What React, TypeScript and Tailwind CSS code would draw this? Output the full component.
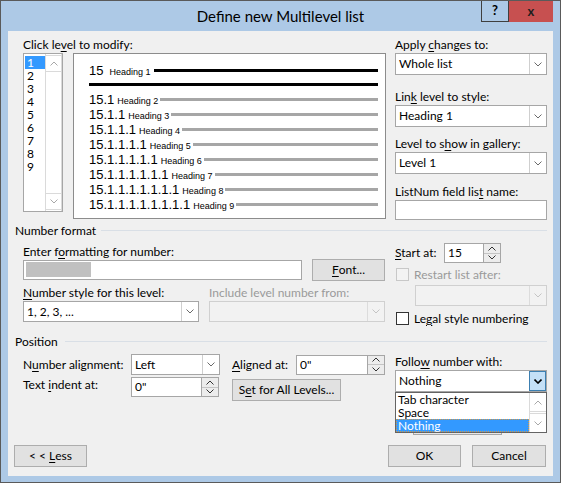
import React from "react";

const UI = "font-['Lato','Noto_Sans','Liberation_Sans',sans-serif]";
const ARIAL = "font-['Liberation_Sans',Arial,sans-serif]";

function U({ children }: { children: React.ReactNode }) {
  return <span className="underline decoration-1 underline-offset-2">{children}</span>;
}

function Down({ c = "#5f5f5f", w = 1 }: { c?: string; w?: number }) {
  return (
    <svg width="8" height="5" viewBox="0 0 8 5">
      <path d="M0.5 0.5 L4 4 L7.5 0.5" fill="none" stroke={c} strokeWidth={w} />
    </svg>
  );
}

function Up({ c = "#5f5f5f", w = 1 }: { c?: string; w?: number }) {
  return (
    <svg width="8" height="5" viewBox="0 0 8 5">
      <path d="M0.5 4.5 L4 1 L7.5 4.5" fill="none" stroke={c} strokeWidth={w} />
    </svg>
  );
}

function Lbl({ children, className = "" }: { children?: React.ReactNode; className?: string }) {
  return <div className={`h-[15px] whitespace-nowrap leading-[15px] ${className}`}>{children}</div>;
}

function Combo({
  value,
  className = "",
  disabled = false,
  active = false,
}: {
  value: string;
  className?: string;
  disabled?: boolean;
  active?: boolean;
}) {
  return (
    <div
      className={`flex border ${
        disabled ? "border-[#d0d0d0] bg-[#f2f2f2]" : "border-[#a6a6a6] bg-white"
      } ${className}`}
    >
      <div className="flex flex-1 items-center whitespace-nowrap pl-[3px] leading-none">{value}</div>
      {active ? (
        <div className="flex w-[17px] items-center justify-center border border-[#3c7fb1] bg-[#c4e0f7]">
          <Down c="#000" w={1.6} />
        </div>
      ) : (
        <div
          className={`flex w-[17px] items-center justify-center border-l ${
            disabled ? "border-[#dcdcdc]" : "border-[#cfcfcf]"
          }`}
        >
          <Down c={disabled ? "#c4c4c4" : "#6a6a6a"} />
        </div>
      )}
    </div>
  );
}

function Spin({ value, className = "" }: { value: string; className?: string }) {
  return (
    <div className={`flex ${className}`}>
      <div className="flex flex-1 items-center border border-[#a6a6a6] bg-white pl-[3px] leading-none">{value}</div>
      <div className="flex w-[17px] flex-col border border-l-0 border-[#a6a6a6] bg-[#ececec]">
        <div className="flex flex-1 items-center justify-center border-b border-[#c4c4c4]">
          <Up c="#333" />
        </div>
        <div className="flex flex-1 items-center justify-center">
          <Down c="#333" />
        </div>
      </div>
    </div>
  );
}

function Btn({ children, className = "" }: { children: React.ReactNode; className?: string }) {
  return (
    <div
      className={`flex items-center justify-center whitespace-pre border border-[#adadad] bg-[#e1e1e1] ${className}`}
    >
      {children}
    </div>
  );
}

function Check({ disabled = false, className = "" }: { disabled?: boolean; className?: string }) {
  return (
    <div
      className={`h-[13px] w-[13px] shrink-0 border ${
        disabled ? "border-[#c8c8c8] bg-[#f3f3f3]" : "border-[#333333] bg-white"
      } ${className}`}
    />
  );
}

function PRow({
  num,
  label,
  black = false,
}: {
  num: string;
  label: string;
  black?: boolean;
}) {
  return (
    <div className={`flex h-[15px] items-baseline ${ARIAL}`}>
      <span className="text-[13px] leading-[15px]">{num}</span>
      <span className={`${black ? "ml-[6px]" : "ml-[3px]"} whitespace-nowrap text-[9px] leading-[15px]`}>
        {label}
      </span>
      <div className={`${black ? "ml-[3px]" : "ml-[2px]"} flex-1 text-[9px] leading-none`}>
        <span
          className={`inline-block h-[3px] w-full align-[3px] ${black ? "bg-black" : "bg-[#a6a6a6]"}`}
        />
      </div>
    </div>
  );
}

const levels = ["1", "2", "3", "4", "5", "6", "7", "8", "9"];

export default function App() {
  const rows = levels.slice(1).map((l, i) => ({
    num: "15" + ".1".repeat(i + 1),
    label: "Heading " + l,
  }));

  return (
    <div className={`${UI} h-[483px] w-[561px] border border-[#5a5a5a] bg-[#adc9e6] text-[12px] text-black`}>
      {/* title bar */}
      <div className="grid h-[30px] grid-cols-[1fr_auto_1fr]">
        <div />
        <div className="whitespace-nowrap pt-[5px] text-[15px] leading-[20px]">Define new Multilevel list</div>
        <div className="flex items-start justify-end pr-[7px]">
          <div className="flex h-[21px] w-[28px] items-center justify-center border border-t-0 border-[#3f3f3f] text-[13px] font-bold">
            ?
          </div>
          <div className="flex h-[21px] w-[44px] items-center justify-center bg-[#c75050] text-[13px] font-bold text-[#1e1e1e]">
            x
          </div>
        </div>
      </div>

      {/* client area */}
      <div className="mx-[7px] flex h-[445px] flex-col bg-[#f0f0f0]">
        {/* level + preview + right column */}
        <div className="flex pl-[15px] pt-[6px]">
          <div className="w-[363px]">
            <Lbl>
              Click le<U>v</U>el to modify:
            </Lbl>
            <div className="mt-[1px] flex">
              <div className="flex h-[159px] w-[40px] border border-[#a6a6a6] bg-white">
                <div className="w-[21px] pl-[1px] pt-[2px]">
                  {levels.map((l) => (
                    <div
                      key={l}
                      className={`h-[13px] pl-[2px] leading-[13px] ${l === "1" ? "bg-[#3399ff] text-white" : ""}`}
                    >
                      {l}
                    </div>
                  ))}
                </div>
                <div className="flex w-[17px] flex-col justify-between border-x border-[#dadada] py-[1px]">
                  <div className="flex h-[17px] items-center justify-center border-y border-[#dadada]">
                    <Up c="#a8a8a8" />
                  </div>
                  <div className="flex h-[17px] items-center justify-center border-y border-[#dadada]">
                    <Down c="#a8a8a8" />
                  </div>
                </div>
              </div>
              <div className="ml-[10px] h-[166px] w-[313px] border border-[#8c8c8c] bg-white pl-[15px] pr-[7px] pt-[9px]">
                <PRow num="15" label="Heading 1" black />
                <div className="mt-[5px] h-[3px] bg-black" />
                <div className="mt-[6px]">
                  {rows.map((r) => (
                    <PRow key={r.num} num={r.num} label={r.label} />
                  ))}
                </div>
              </div>
            </div>
          </div>
          <div className="ml-[9px] w-[152px]">
            <Lbl>
              Apply <U>c</U>hanges to:
            </Lbl>
            <Combo value="Whole list" className="mt-[1px] h-[22px]" />
            <Lbl className="mt-[14px]">
              Lin<U>k</U> level to style:
            </Lbl>
            <Combo value="Heading 1" className="mt-[1px] h-[22px]" />
            <Lbl className="mt-[9px]">
              Level to s<U>h</U>ow in gallery:
            </Lbl>
            <Combo value="Level 1" className="mt-[1px] h-[22px]" />
            <Lbl className="mt-[10px]">
              ListNum field lis<U>t</U> name:
            </Lbl>
            <div className="mt-[1px] h-[20px] border border-[#a6a6a6] bg-white" />
          </div>
        </div>

        {/* Number format */}
        <div className="mt-[3px] flex h-[15px] items-center pl-[7px] pr-[6px]">
          <span className="leading-[15px]">Number format</span>
          <div className="ml-[5px] h-px flex-1 bg-[#d9dfe6]" />
        </div>
        <div className="flex pl-[15px]">
          <div className="w-[362px]">
            <Lbl className="mt-[6px]">
              Enter f<U>o</U>rmatting for number:
            </Lbl>
            <div className="flex items-start">
              <div className="mt-[1px] h-[20px] w-[279px] border border-[#a6a6a6] bg-white p-[1px]">
                <div className="ml-[1px] h-[15px] w-[65px] bg-[#c0c0c0]" />
              </div>
              <Btn className="ml-[10px] h-[22px] w-[73px]">
                <U>F</U>ont...
              </Btn>
            </div>
            <div className="mt-[4px] grid grid-cols-[176px_176px] gap-x-[10px]">
              <Lbl>
                <U>N</U>umber style for this level:
              </Lbl>
              <Lbl className="text-[#9a9a9a]">Include level number from:</Lbl>
              <Combo value="1, 2, 3, ..." className="mt-[1px] h-[21px]" />
              <Combo value="" disabled className="mt-[1px] h-[21px]" />
            </div>
          </div>
          <div className="ml-[10px] w-[152px]">
            <div className="mt-[5px] flex items-center">
              <span className="w-[49px] whitespace-nowrap">
                <U>S</U>tart at:
              </span>
              <Spin value="15" className="h-[20px] w-[57px]" />
            </div>
            <div className="mt-[5px] flex h-[13px] items-center">
              <Check disabled className="ml-[1px]" />
              <span className="ml-[5px] whitespace-nowrap text-[#9a9a9a]">Restart list after:</span>
            </div>
            <Combo value="" disabled className="ml-[20px] mt-[4px] h-[21px] w-[132px]" />
            <div className="mt-[6px] flex h-[13px] items-center">
              <Check className="ml-[1px]" />
              <span className="ml-[5px] whitespace-nowrap">
                Le<U>g</U>al style numbering
              </span>
            </div>
          </div>
        </div>

        {/* Position */}
        <div className="mt-[9px] flex h-[15px] items-center pl-[7px] pr-[6px]">
          <span className="leading-[15px]">Position</span>
          <div className="ml-[7px] h-px flex-1 bg-[#d9dfe6]" />
        </div>
        <div className="flex pl-[15px]">
          <div className="w-[362px]">
            <div className="mt-[5px] flex items-center">
              <span className="w-[108px] whitespace-nowrap">
                N<U>u</U>mber alignment:
              </span>
              <Combo value="Left" className="h-[21px] w-[89px]" />
              <span className="ml-[12px] w-[64px] whitespace-nowrap">
                <U>A</U>ligned at:
              </span>
              <Spin value={'0"'} className="h-[20px] w-[89px]" />
            </div>
            <div className="mt-[2px] flex items-start">
              <span className="w-[108px] whitespace-nowrap leading-[15px]">
                Text <U>i</U>ndent at:
              </span>
              <Spin value={'0"'} className="h-[20px] w-[88px]" />
              <Btn className="ml-[13px] mt-[2px] h-[22px] w-[109px]">
                S<U>e</U>t for All Levels...
              </Btn>
            </div>
          </div>
          <div className="ml-[10px] w-[152px]">
            <Lbl className="mt-[5px]">
              Follo<U>w</U> number with:
            </Lbl>
            <div className="relative mt-[1px]">
              <Combo value="Nothing" active className="h-[22px]" />
              <div className="absolute left-0 top-full z-10 flex h-[41px] w-full border border-[#646464] bg-white">
                <div className="flex-1 leading-[13px]">
                  <div className="h-[13px] whitespace-nowrap pl-[2px]">Tab character</div>
                  <div className="h-[13px] whitespace-nowrap pl-[2px]">Space</div>
                  <div className="h-[13px] whitespace-nowrap border border-dotted border-[#d29a4a] bg-[#3399ff] pl-[1px] leading-[11px] text-white">
                    Nothing
                  </div>
                </div>
                <div className="flex w-[17px] flex-col justify-between border-l border-[#dadada]">
                  <div className="flex h-[19px] items-center justify-center border-b border-[#dadada]">
                    <Up c="#a8a8a8" />
                  </div>
                  <div className="flex h-[19px] items-center justify-center border-t border-[#dadada]">
                    <Down c="#a8a8a8" />
                  </div>
                </div>
              </div>
            </div>
            <div className="ml-[18px] mt-[22px] h-[21px] w-[89px] border border-[#a6a6a6] bg-[#e8e8e8]" />
          </div>
        </div>

        {/* buttons */}
        <div className="mt-auto flex pb-[9px] pl-[6px] pr-[7px]">
          <Btn className="h-[22px] w-[73px]">
            {"< < "}
            <U>L</U>ess
          </Btn>
          <Btn className="ml-auto h-[22px] w-[73px]">OK</Btn>
          <Btn className="ml-[11px] h-[22px] w-[74px]">Cancel</Btn>
        </div>
      </div>
    </div>
  );
}
